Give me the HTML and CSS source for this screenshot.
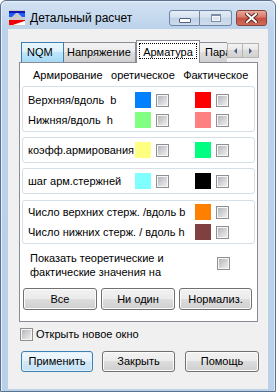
FILE: index.html
```html
<!DOCTYPE html>
<html lang="ru">
  <head>
    <meta charset="UTF-8" />
    <meta name="viewport" content="width=device-width, initial-scale=1.0" />
    <title>Детальный расчет</title>
    <link rel="stylesheet" href="styles.css">
  </head>
  <body>
    <div class="window">
      <div class="titlebar">
        <svg class="app-icon" width="16" height="16" viewBox="0 0 16 16">
          <rect x="0" y="0" width="16" height="16" fill="#c9c9c9" />
          <rect x="0" y="1" width="16" height="2" fill="#1018b0" />
          <polygon points="0,3 7,3 3,7 0,7" fill="#1c5cff" />
          <polygon points="9,3 16,3 16,7 13,7" fill="#1c5cff" />
          <polygon points="0,10 16,10 16,11 4,15 0,15" fill="#f00000" />
          <polygon points="4,15 16,11 16,15" fill="#ffffff" />
        </svg>
        <span class="title">Детальный расчет</span>
        <div class="caption">
          <span class="cap-btn cap-min"><span class="min-glyph"></span></span>
          <span class="cap-btn cap-max"><span class="max-glyph"></span></span>
          <span class="cap-btn cap-close">
            <svg width="13" height="10" viewBox="0 0 13 10">
              <path d="M2 1 L11 9 M11 1 L2 9" stroke="#5a2a24" stroke-width="4" stroke-linecap="square" />
              <path d="M2 1 L11 9 M11 1 L2 9" stroke="#ffffff" stroke-width="2" stroke-linecap="square" />
            </svg>
          </span>
        </div>
      </div>

      <div class="client">
        <div class="tabs">
          <span class="tab tab-hover">NQM</span>
          <span class="tab tab-wide">Напряжение</span>
          <span class="tab tab-active"><span class="focus">Арматура</span></span>
          <span class="tab tab-cut">Пара</span>
          <span class="tab-scroll">
            <span class="scroll-btn"><span class="arrow-left"></span></span>
            <span class="scroll-btn"><span class="arrow-right"></span></span>
          </span>
        </div>

        <div class="panel">
          <div class="header">
            <span class="h-name">Армирование</span>
            <span class="h-theory">оретическое</span>
            <span>Фактическое</span>
          </div>

          <div class="group group-two">
            <span class="label">Верхняя/вдоль&nbsp; b</span>
            <span class="swatch" style="background:#0080ff"></span>
            <span class="check"></span>
            <span class="swatch" style="background:#ff0000"></span>
            <span class="check"></span>

            <span class="label">Нижняя/вдоль&nbsp; h</span>
            <span class="swatch" style="background:#80ff80"></span>
            <span class="check"></span>
            <span class="swatch" style="background:#ff8080"></span>
            <span class="check"></span>
          </div>

          <div class="group">
            <span class="label">коэфф.армирования</span>
            <span class="swatch" style="background:#ffff80"></span>
            <span class="check"></span>
            <span class="swatch" style="background:#00ff80"></span>
            <span class="check"></span>
          </div>

          <div class="group">
            <span class="label">шаг арм.стержней</span>
            <span class="swatch" style="background:#80ffff"></span>
            <span class="check"></span>
            <span class="swatch" style="background:#000000"></span>
            <span class="check"></span>
          </div>

          <div class="group group-count">
            <span class="label label-long">Число верхних стерж. /вдоль b</span>
            <span class="swatch" style="background:#ff8000"></span>
            <span class="check"></span>

            <span class="label label-long">Число нижних стерж. / вдоль h</span>
            <span class="swatch" style="background:#804040"></span>
            <span class="check"></span>
          </div>

          <div class="show-row">
            <span class="show-text">Показать теоретические и<br />фактические значения на</span>
            <span class="check"></span>
          </div>

          <div class="panel-buttons">
            <span class="btn btn-all">Все</span>
            <span class="btn btn-none">Ни один</span>
            <span class="btn btn-norm">Нормализ.</span>
          </div>
        </div>

        <div class="open-new">
          <span class="check"></span>
          <span>Открыть новое окно</span>
        </div>

        <div class="dialog-buttons">
          <span class="btn btn-default btn-apply">Применить</span>
          <span class="btn btn-close">Закрыть</span>
          <span class="btn btn-help">Помощь</span>
        </div>
      </div>
    </div>
  </body>
</html>
```

FILE: styles.css
```css
* {
  box-sizing: border-box;
}

body {
  margin: 0;
  font-family: "Liberation Sans", Arial, sans-serif;
  font-size: 11px;
  color: #000;
  background: #fff;
}

.window {
  width: 276px;
  height: 392px;
  border: 1px solid #5b718d;
  border-radius: 6px 6px 0 0;
  padding: 0 7px 2px 7px;
  background: linear-gradient(#d3e2f3, #bcd2ea 28px, #bad1ea);
  box-shadow: inset 1px 1px 0 #e6eff9, inset -1px 0 0 #dde9f6;
}

/* title bar */
.titlebar {
  height: 28px;
  margin: 0 -7px;
  padding: 9px 8px 0 8px;
  display: flex;
  align-items: flex-start;
}

.app-icon {
  display: block;
  flex: none;
}

.title {
  margin-left: 5px;
  font-size: 12px;
  line-height: 16px;
  color: #000;
}

.caption {
  margin-left: auto;
  display: flex;
}

.cap-btn {
  height: 16px;
  display: flex;
  align-items: center;
  justify-content: center;
  border: 1px solid #6d86a6;
}

.cap-min {
  width: 31px;
  border-radius: 3px 0 0 3px;
  background: linear-gradient(#e6eef7, #d6e2f0 45%, #bfd1e6 50%, #cddcee);
  align-items: flex-end;
  padding-bottom: 2px;
}

.cap-max {
  width: 32px;
  border-left: none;
  border-radius: 0 3px 3px 0;
  background: linear-gradient(#e2ebf5, #d5e1ee 45%, #c4d5e8 50%, #cfddec);
}

.cap-close {
  width: 31px;
  margin-left: 4px;
  border-color: #86453c;
  border-radius: 3px;
  background: linear-gradient(#e7a99b, #d8786a 45%, #c54f3f 50%, #d06c5c);
}

.cap-close svg {
  display: block;
}

.min-glyph {
  width: 12px;
  height: 5px;
  border: 1px solid #4f627d;
  background: #fff;
  border-radius: 1px;
}

.max-glyph {
  width: 10px;
  height: 8px;
  border: 1px solid #7b8ca3;
  border-top-width: 2px;
  background: #dde6f0;
  box-shadow: inset 0 0 0 1px #f3f6fa;
}

/* client area */
.client {
  height: 360px;
  background: #f0f0f0;
  padding-top: 11px;
}

.tabs {
  height: 22px;
  margin-left: 13px;
  display: flex;
  align-items: flex-end;
}

.tab {
  height: 20px;
  line-height: 19px;
  padding-left: 5px;
  border: 1px solid #898c95;
  border-bottom: none;
  background: linear-gradient(#f2f2f2, #ebebeb 50%, #dddddd 50%, #cfcfcf);
  white-space: nowrap;
  overflow: hidden;
}

.tab-hover {
  width: 43px;
  border-color: #3c7fb1;
  background: linear-gradient(#eaf6fd, #d9f0fc 50%, #bee6fd 50%, #a7d9f5);
}

.tab-wide {
  width: 72px;
  padding-left: 3px;
  border-left: none;
}

.tab-active {
  position: relative;
  z-index: 1;
  width: 64px;
  height: 23px;
  margin-bottom: -1px;
  padding: 2px 0 0 2px;
  background: #fff;
}

.focus {
  display: block;
  width: 58px;
  height: 16px;
  line-height: 15px;
  padding-top: 1px;
  border: 1px dotted #000;
  text-align: center;
}

.tab-cut {
  width: 27px;
  border-left: none;
  border-right: none;
}

.tab-scroll {
  display: flex;
  margin-bottom: 4px;
}

.scroll-btn {
  width: 16px;
  height: 15px;
  display: flex;
  align-items: center;
  justify-content: center;
  border: 1px solid #b4b4b4;
  background: linear-gradient(#f4f4f4, #e6e6e6 50%, #dadada 50%, #d2d2d2);
}

.scroll-btn + .scroll-btn {
  border-left: none;
}

.arrow-left {
  width: 0;
  height: 0;
  border-top: 3px solid transparent;
  border-bottom: 3px solid transparent;
  border-right: 3px solid #4a5f82;
}

.arrow-right {
  width: 0;
  height: 0;
  border-top: 3px solid transparent;
  border-bottom: 3px solid transparent;
  border-left: 3px solid #4a5f82;
}

.panel {
  width: 239px;
  height: 260px;
  margin-left: 11px;
  padding: 5px 1px 0 0;
  border: 1px solid #898c95;
  background: #fff;
}

.header {
  height: 14px;
  line-height: 14px;
  padding-left: 13px;
  white-space: nowrap;
}

.header span {
  display: inline-block;
}

.h-name {
  width: 75px;
}

.h-theory {
  width: 69px;
}

.group {
  margin: 5px 1px 0 2px;
  padding: 2px 0 2px 5px;
  border: 1px solid #d5dfe5;
  border-radius: 3px;
  display: grid;
  grid-template-columns: 107px 21px 39px 21px 13px;
  grid-auto-rows: 20px;
  align-items: center;
}

.header + .group {
  margin-top: 4px;
}

.group-two {
  padding: 3px 0 1px 5px;
}

.group-count {
  margin-top: 6px;
  padding: 1px 0 1px 5px;
}

.label {
  white-space: nowrap;
  line-height: 14px;
}

.label-long {
  grid-column: 1 / 4;
}

.swatch {
  width: 16px;
  height: 16px;
}

.check {
  display: block;
  width: 13px;
  height: 13px;
  padding: 1px;
  border: 1px solid #8f8f8f;
  background: linear-gradient(135deg, #b4b7bc, #eeeeef) content-box, #f5f5f5;
}

.show-row {
  display: flex;
  margin-top: 7px;
  padding-left: 10px;
}

.show-text {
  width: 187px;
  line-height: 14px;
}

.show-row .check {
  margin-top: 6px;
}

.panel-buttons {
  display: flex;
  gap: 4px;
  margin-top: 9px;
  padding-left: 3px;
}

.btn {
  display: block;
  height: 22px;
  line-height: 20px;
  text-align: center;
  border: 1px solid #707070;
  border-radius: 3px;
  background: linear-gradient(#f2f2f2, #ebebeb 50%, #dddddd 50%, #cfcfcf);
  box-shadow: inset 0 0 0 1px #fbfbfb;
}

.btn-all,
.btn-none {
  width: 74px;
}

.btn-norm {
  width: 73px;
}

.open-new {
  display: flex;
  align-items: center;
  gap: 3px;
  margin: 6px 0 0 12px;
  height: 13px;
  line-height: 13px;
}

.dialog-buttons {
  display: flex;
  margin-top: 10px;
  padding-left: 13px;
}

.dialog-buttons .btn {
  height: 21px;
  line-height: 19px;
}

.btn-apply {
  width: 72px;
}

.btn-close {
  width: 73px;
  margin-left: 9px;
}

.btn-help {
  width: 74px;
  margin-left: 10px;
}

.btn-default {
  border-color: #3c7fb1;
  background: linear-gradient(#f1f8fd, #e3f1fb 50%, #d2e9f8 50%, #c4e1f5);
  box-shadow: inset 0 0 0 1px #e2f2fc;
}
```
